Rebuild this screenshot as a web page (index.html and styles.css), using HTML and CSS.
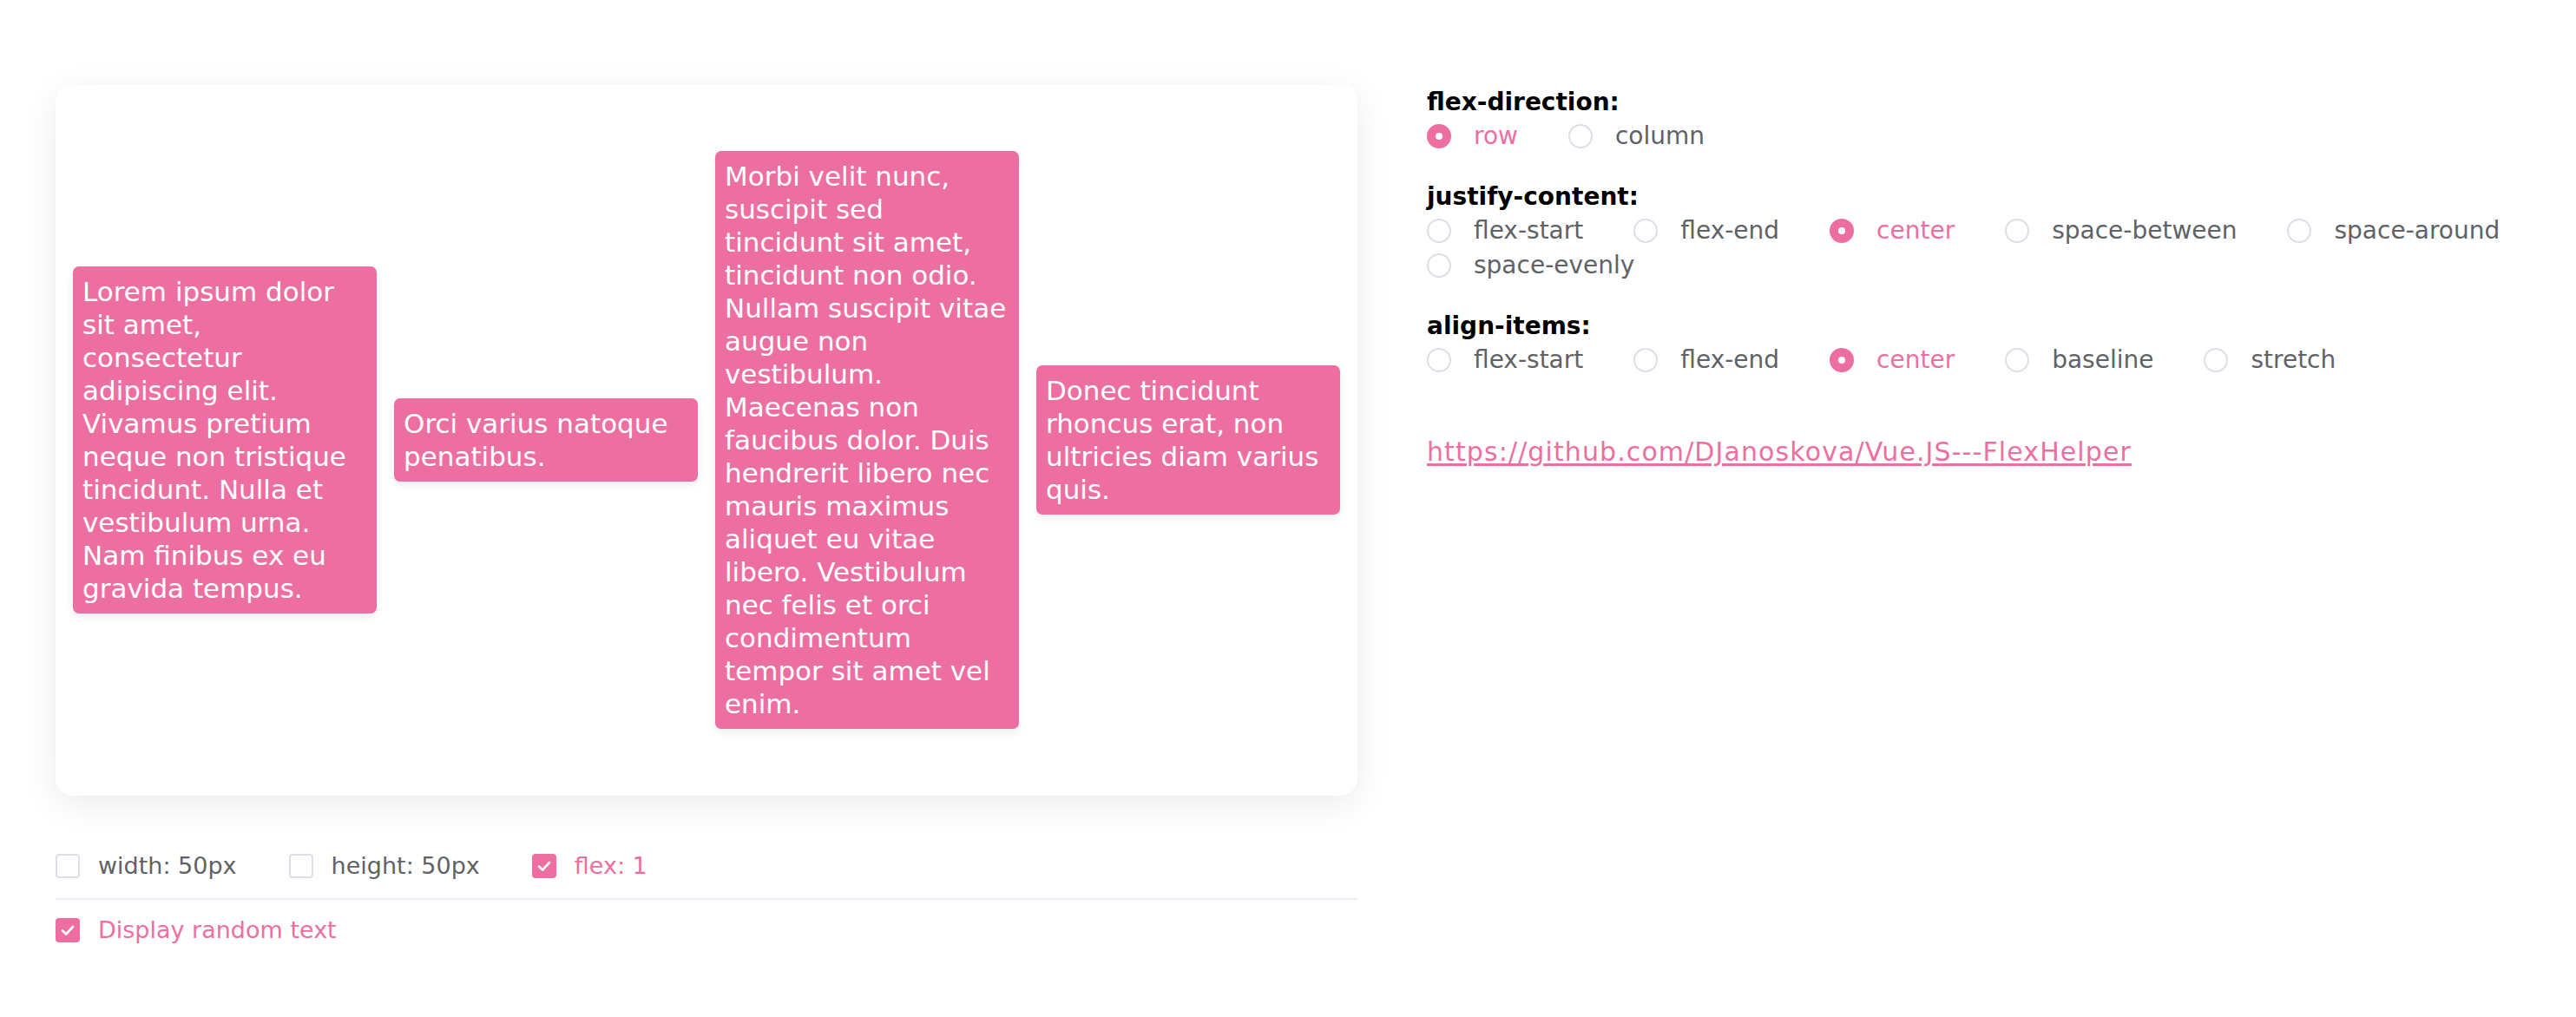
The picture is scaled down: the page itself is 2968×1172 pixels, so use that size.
FILE: index.html
```html
<!DOCTYPE html>
<html lang="en">
<head>
<meta charset="utf-8">
<title>Flex Helper</title>
<link rel="stylesheet" href="styles.css">
</head>
<body>
<div class="page">
  <div class="left">
    <div class="card">
      <div class="box">Lorem ipsum dolor<br>sit amet,<br>consectetur<br>adipiscing elit.<br>Vivamus pretium<br>neque non tristique<br>tincidunt. Nulla et<br>vestibulum urna.<br>Nam finibus ex eu<br>gravida tempus.</div>
      <div class="box">Orci varius natoque<br>penatibus.</div>
      <div class="box">Morbi velit nunc,<br>suscipit sed<br>tincidunt sit amet,<br>tincidunt non odio.<br>Nullam suscipit vitae<br>augue non<br>vestibulum.<br>Maecenas non<br>faucibus dolor. Duis<br>hendrerit libero nec<br>mauris maximus<br>aliquet eu vitae<br>libero. Vestibulum<br>nec felis et orci<br>condimentum<br>tempor sit amet vel<br>enim.</div>
      <div class="box">Donec tincidunt<br>rhoncus erat, non<br>ultricies diam varius<br>quis.</div>
    </div>
    <div class="options">
      <div class="opt-row">
        <label class="check"><span class="cbox"></span><span class="lbl">width: 50px</span></label>
        <label class="check"><span class="cbox"></span><span class="lbl">height: 50px</span></label>
        <label class="check on"><span class="cbox"><svg viewBox="0 0 28 28" width="28" height="28"><path d="M8 14.5 L12.2 18.5 L20 10" fill="none" stroke="#fff" stroke-width="2.6" stroke-linecap="round" stroke-linejoin="round"/></svg></span><span class="lbl">flex: 1</span></label>
      </div>
      <div class="divider"></div>
      <div class="opt-row">
        <label class="check on"><span class="cbox"><svg viewBox="0 0 28 28" width="28" height="28"><path d="M8 14.5 L12.2 18.5 L20 10" fill="none" stroke="#fff" stroke-width="2.6" stroke-linecap="round" stroke-linejoin="round"/></svg></span><span class="lbl">Display random text</span></label>
      </div>
    </div>
  </div>
  <div class="right">
    <div class="group">
      <div class="heading">flex-direction:</div>
      <div class="radios">
        <label class="radio on"><span class="circle"></span><span class="lbl">row</span></label>
        <label class="radio"><span class="circle"></span><span class="lbl">column</span></label>
      </div>
    </div>
    <div class="group">
      <div class="heading">justify-content:</div>
      <div class="radios">
        <label class="radio"><span class="circle"></span><span class="lbl">flex-start</span></label>
        <label class="radio"><span class="circle"></span><span class="lbl">flex-end</span></label>
        <label class="radio on"><span class="circle"></span><span class="lbl">center</span></label>
        <label class="radio"><span class="circle"></span><span class="lbl">space-between</span></label>
        <label class="radio"><span class="circle"></span><span class="lbl">space-around</span></label>
        <label class="radio"><span class="circle"></span><span class="lbl">space-evenly</span></label>
      </div>
    </div>
    <div class="group">
      <div class="heading">align-items:</div>
      <div class="radios">
        <label class="radio"><span class="circle"></span><span class="lbl">flex-start</span></label>
        <label class="radio"><span class="circle"></span><span class="lbl">flex-end</span></label>
        <label class="radio on"><span class="circle"></span><span class="lbl">center</span></label>
        <label class="radio"><span class="circle"></span><span class="lbl">baseline</span></label>
        <label class="radio"><span class="circle"></span><span class="lbl">stretch</span></label>
      </div>
    </div>
    <a class="link" href="#">https://github.com/DJanoskova/Vue.JS---FlexHelper</a>
  </div>
</div>
</body>
</html>
```

FILE: styles.css
```css
html, body {
  margin: 0;
  padding: 0;
  background: #ffffff;
}
body {
  font-family: "DejaVu Sans", "Liberation Sans", sans-serif;
  color: #606266;
}
.page {
  display: flex;
  align-items: flex-start;
  gap: 80px;
  padding: 97px 0 0 64px;
}
.left {
  width: 1500px;
  flex: none;
}
.card {
  height: 820px;
  border-radius: 20px;
  background: #fff;
  box-shadow: 0 10px 40px rgba(0, 0, 0, 0.08);
  display: flex;
  align-items: center;
  gap: 20px;
  padding: 0 20px;
  box-sizing: border-box;
}
.box {
  flex: 1;
  min-width: 0;
  background: #ed6fa1;
  color: #fff;
  border-radius: 7px;
  padding: 10px 11px;
  font-size: 31px;
  line-height: 38px;
  white-space: nowrap;
  box-shadow: 0 4px 10px rgba(0, 0, 0, 0.07);
}
.options {
  margin-top: 61px;
}
.opt-row {
  display: flex;
  height: 40px;
  align-items: center;
  gap: 60px;
}
.divider {
  height: 2px;
  background: #ebeef5;
  margin: 17px 0 15px;
}
.check, .radio {
  display: flex;
  align-items: center;
  line-height: 40px;
  color: #606266;
  white-space: nowrap;
}
.check {
  font-size: 27px;
}
.radio {
  font-size: 28px;
}
.check .lbl {
  margin-left: 21px;
}
.cbox {
  width: 28px;
  height: 28px;
  box-sizing: border-box;
  border: 2px solid #dcdfe6;
  border-radius: 4px;
  display: block;
  position: relative;
  background: #fff;
}
.cbox svg {
  position: absolute;
  left: -2px;
  top: -2px;
}
.check.on .cbox {
  background: #ed6fa1;
  border-color: #ed6fa1;
}
.check.on, .radio.on {
  color: #ed6fa1;
}
.right {
  flex: 1;
  min-width: 0;
  padding-top: 2px;
  padding-right: 20px;
}
.group {
  margin-bottom: 31px;
}
.heading {
  font-weight: bold;
  font-size: 28px;
  line-height: 38px;
  color: #000;
}
.radios {
  display: flex;
  flex-wrap: wrap;
  column-gap: 58px;
}
.circle {
  width: 28px;
  height: 28px;
  box-sizing: border-box;
  border: 2px solid #dcdfe6;
  border-radius: 50%;
  display: block;
  position: relative;
  background: #fff;
}
.radio .lbl {
  margin-left: 26px;
}
.radio.on .circle {
  background: #ed6fa1;
  border-color: #ed6fa1;
}
.radio.on .circle::after {
  content: "";
  position: absolute;
  width: 8px;
  height: 8px;
  border-radius: 50%;
  background: #fff;
  left: 8px;
  top: 8px;
}
.link {
  display: inline-block;
  margin-top: 36px;
  font-size: 30px;
  letter-spacing: 1.1px;
  line-height: 38px;
  color: #ed6fa1;
  text-decoration: underline;
  text-underline-offset: 3px;
}
```
